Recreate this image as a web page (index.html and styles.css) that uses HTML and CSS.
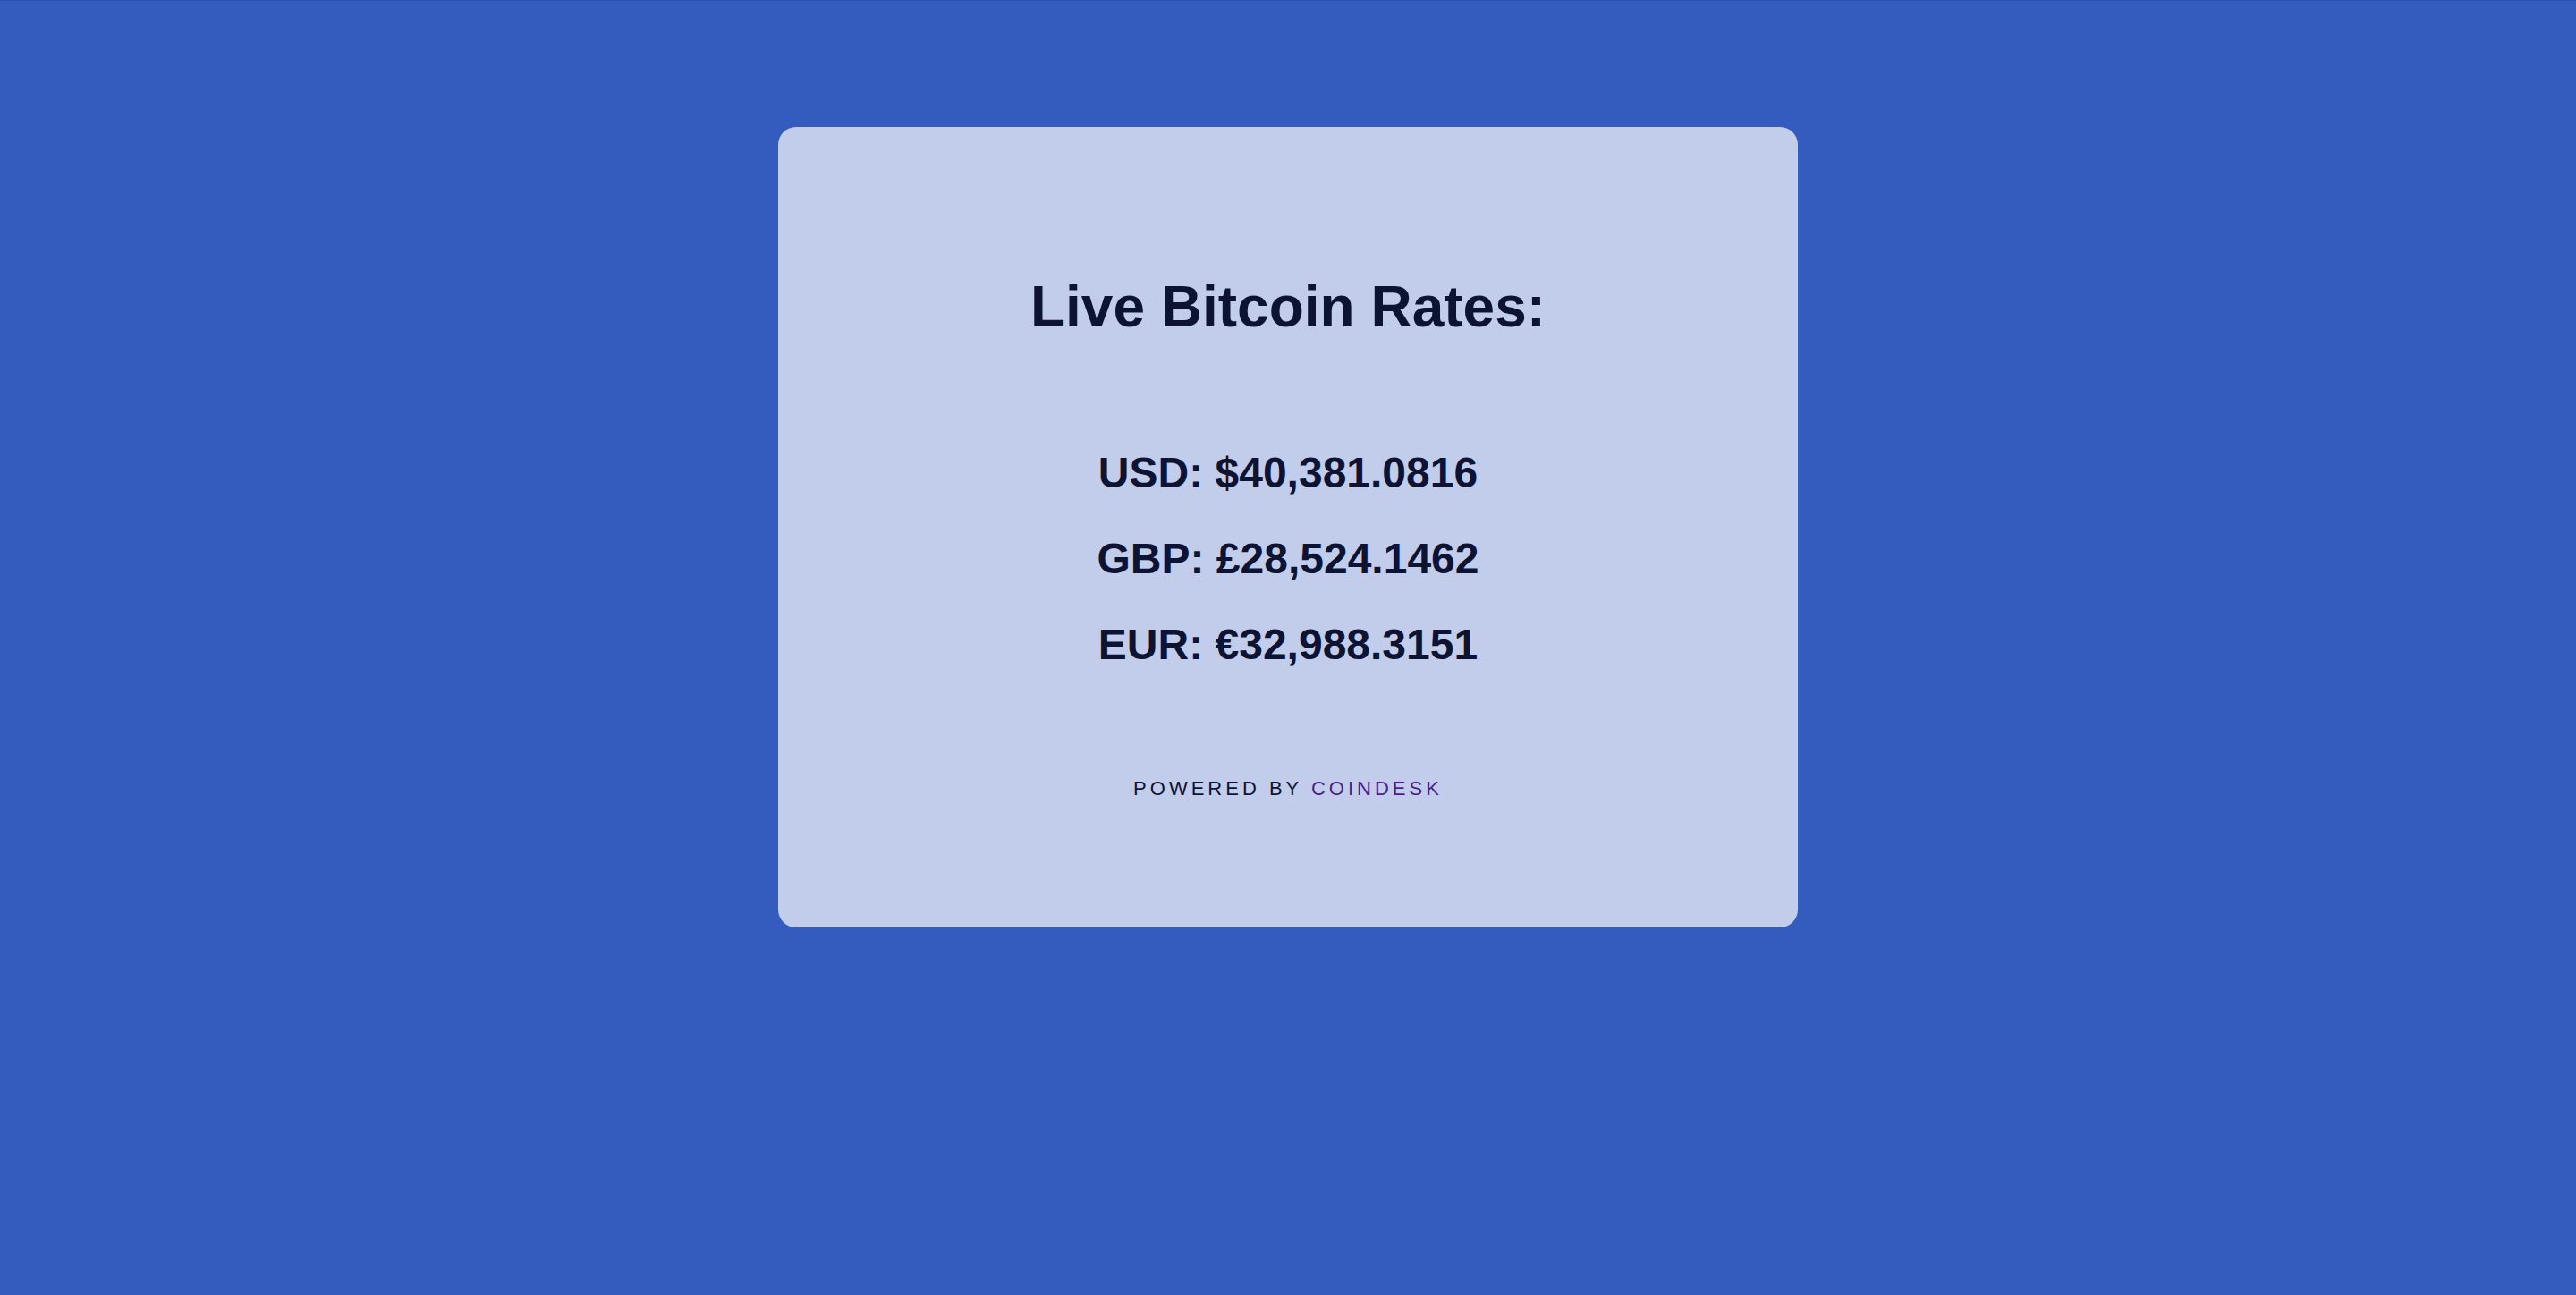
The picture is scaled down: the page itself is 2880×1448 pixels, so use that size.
FILE: index.html
```html
<!DOCTYPE html>
<html lang="en">
<head>
<meta charset="utf-8">
<title>Live Bitcoin Rates</title>
<link rel="stylesheet" href="styles.css">
</head>
<body>
<main class="card">
  <h1 class="title">Live Bitcoin Rates:</h1>
  <div class="rates">
    <p class="rate">USD: $40,381.0816</p>
    <p class="rate">GBP: £28,524.1462</p>
    <p class="rate">EUR: €32,988.3151</p>
  </div>
  <p class="powered">POWERED BY <a class="brand" href="#">COINDESK</a></p>
</main>
</body>
</html>
```
FILE: styles.css
```css
html, body {
  margin: 0;
  padding: 0;
}
body {
  background: #335cbe;
  min-height: 1448px;
  font-family: "Liberation Sans", Arial, Helvetica, sans-serif;
  color: #0d1333;
  border-top: 1px solid #2a4fae;
  box-sizing: border-box;
}
.card {
  width: 1140px;
  box-sizing: border-box;
  margin: 141px auto 0;
  padding: 169px 0 144px;
  background: #c2cdeb;
  border-radius: 20px;
  display: flex;
  flex-direction: column;
  align-items: center;
  text-align: center;
}
.title {
  margin: 0;
  font-size: 64px;
  line-height: 64px;
  font-weight: 700;
}
.rates {
  margin-top: 106px;
  display: flex;
  flex-direction: column;
}
.rate {
  margin: 0;
  font-size: 48px;
  line-height: 96px;
  font-weight: 700;
}
.powered {
  margin: 102px 0 0;
  font-size: 22px;
  line-height: 22px;
  letter-spacing: 4px;
  font-weight: 400;
}
.brand {
  color: #4b1f8a;
  text-decoration: none;
}
```
